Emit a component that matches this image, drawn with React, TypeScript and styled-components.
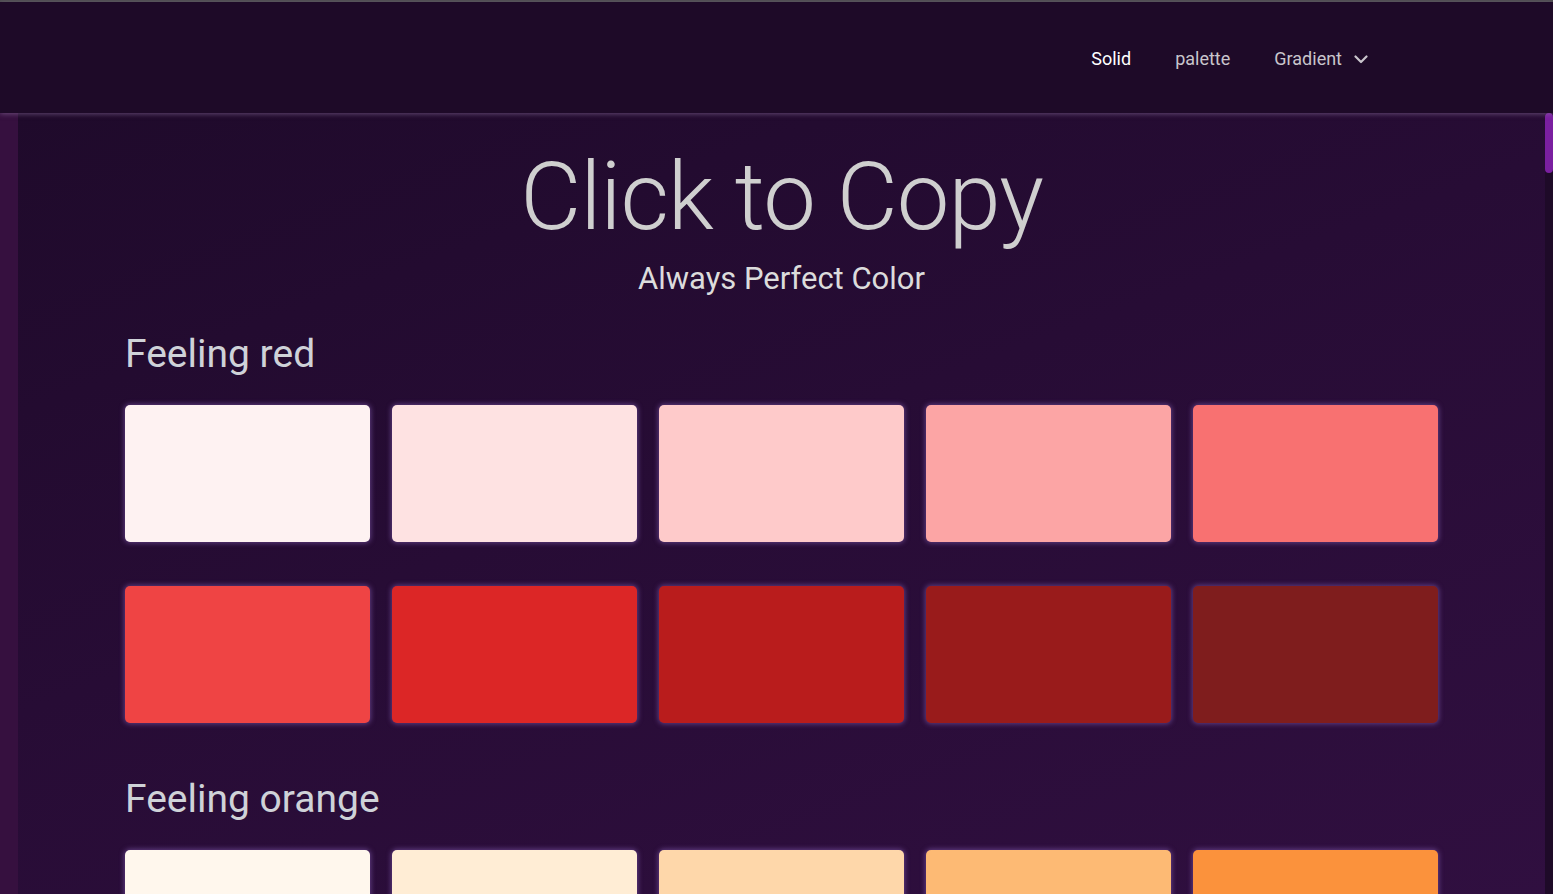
import React from 'react';
import styled, { createGlobalStyle } from 'styled-components';

const GlobalStyle = createGlobalStyle`
  html, body {
    margin: 0;
    padding: 0;
    height: 100%;
    overflow: hidden;
    background: #1e0a28;
    font-family: Roboto, "Noto Sans", sans-serif;
  }
  * {
    box-sizing: border-box;
  }
`;

const palettes: { name: string; shades: string[] }[] = [
  { name: 'red', shades: ['#fef2f2', '#fee2e2', '#fecaca', '#fca5a5', '#f87171', '#ef4444', '#dc2626', '#b91c1c', '#991b1b', '#7f1d1d'] },
  { name: 'orange', shades: ['#fff7ed', '#ffedd5', '#fed7aa', '#fdba74', '#fb923c', '#f97316', '#ea580c', '#c2410c', '#9a3412', '#7c2d12'] },
];

const Page = styled.div`
  display: flex;
  flex-direction: column;
  height: 100vh;
  border-top: 2px solid #4b4b4d;
`;

const Navbar = styled.nav`
  position: relative;
  z-index: 1;
  flex: 0 0 111px;
  display: flex;
  align-items: center;
  justify-content: flex-end;
  gap: 44px;
  padding: 2px 185px 0 0;
  background: #1e0a28;
  box-shadow: 0 1px 5px rgba(150, 120, 170, 0.55);
`;

const NavItem = styled.button<{ active?: boolean }>`
  display: flex;
  align-items: center;
  gap: 12px;
  padding: 0;
  border: none;
  background: none;
  cursor: pointer;
  font-family: Roboto, "Noto Sans", sans-serif;
  font-size: 18px;
  color: ${p => (p.active ? '#ffffff' : '#c9c5cc')};
`;

const Body = styled.div`
  flex: 1;
  display: flex;
  min-height: 0;
`;

const SideStrip = styled.aside`
  flex: 0 0 18px;
  background: #36103f;
`;

const Main = styled.main`
  flex: 1;
  overflow: hidden;
  background: linear-gradient(160deg, #1f0a2b 0%, #270c35 45%, #300f40 100%);
`;

const ScrollTrack = styled.div`
  position: relative;
  flex: 0 0 8px;
  background: #1e0a28;
`;

const ScrollThumb = styled.div`
  position: absolute;
  top: 0;
  left: 0;
  width: 8px;
  height: 60px;
  border-radius: 4px;
  background: #7a1fa0;
`;

const Container = styled.div`
  width: 1313px;
  margin: 0 auto;
  padding: 28px 0 60px;
`;

const Hero = styled.header`
  display: flex;
  flex-direction: column;
  align-items: center;
  color: #cfcfcf;
`;

const Title = styled.h1`
  margin: 0;
  font-size: 94px;
  font-weight: 300;
  line-height: 112px;
  letter-spacing: -1px;
`;

const Subtitle = styled.p`
  margin: 8px 0 0;
  font-size: 31px;
  font-weight: 400;
  line-height: 36px;
  color: #dcdcdc;
`;

const Section = styled.section`
  margin-top: 52px;
  &:first-of-type {
    margin-top: 33px;
  }
`;

const SectionTitle = styled.h2`
  margin: 0 0 27px;
  font-size: 39px;
  font-weight: 400;
  line-height: 48px;
  color: #cfd2d8;
`;

const Grid = styled.div`
  display: grid;
  grid-template-columns: repeat(5, 245px);
  column-gap: 22px;
  row-gap: 44px;
`;

const Swatch = styled.button<{ color: string }>`
  height: 137px;
  border: none;
  border-radius: 5px;
  cursor: pointer;
  background: ${p => p.color};
  box-shadow: 0 0 5px 1px rgba(140, 100, 190, 0.55);
`;

const Chevron = () => (
  <svg width="14" height="14" viewBox="0 0 14 14" fill="none" stroke="currentColor" strokeWidth="2.2" strokeLinecap="round" strokeLinejoin="round">
    <path d="M1.5 4.5l5.5 5.5 5.5-5.5" />
  </svg>
);

export default function App() {
  return (
    <>
      <GlobalStyle />
      <Page>
        <Navbar>
          <NavItem active>Solid</NavItem>
          <NavItem>palette</NavItem>
          <NavItem>
            Gradient
            <Chevron />
          </NavItem>
        </Navbar>
        <Body>
          <SideStrip />
          <Main>
            <Container>
              <Hero>
                <Title>Click to Copy</Title>
                <Subtitle>Always Perfect Color</Subtitle>
              </Hero>
              {palettes.map(p => (
                <Section key={p.name}>
                  <SectionTitle>Feeling {p.name}</SectionTitle>
                  <Grid>
                    {p.shades.map(c => (
                      <Swatch key={c} color={c} title={c} />
                    ))}
                  </Grid>
                </Section>
              ))}
            </Container>
          </Main>
          <ScrollTrack>
            <ScrollThumb />
          </ScrollTrack>
        </Body>
      </Page>
    </>
  );
}
